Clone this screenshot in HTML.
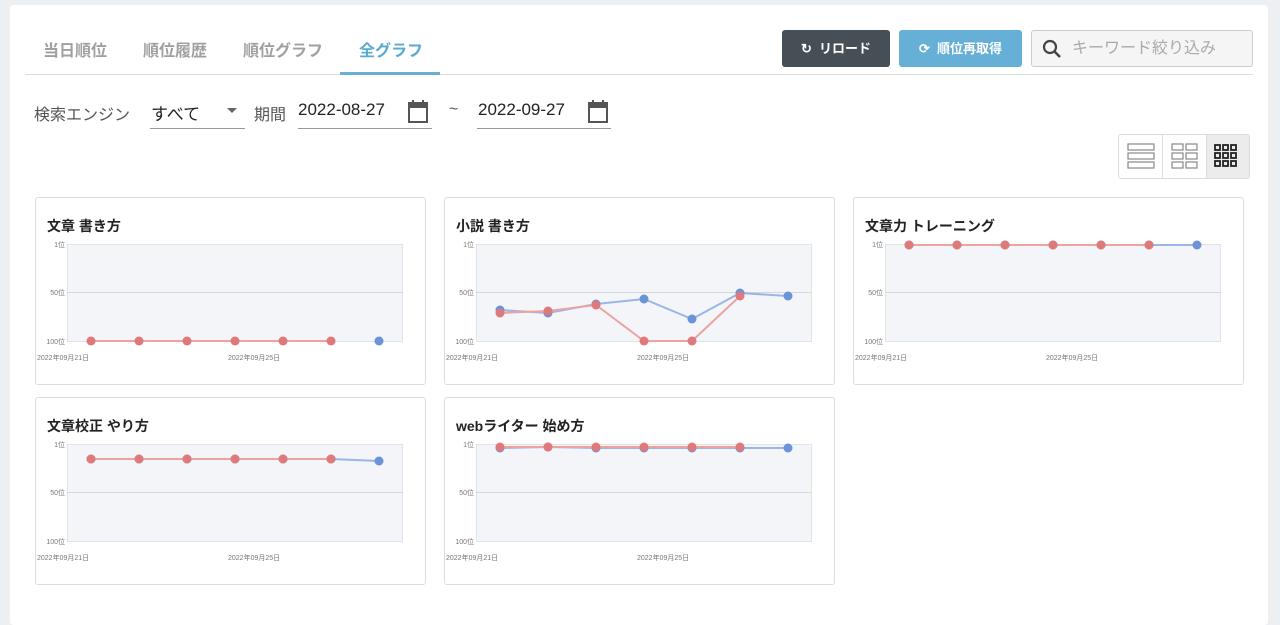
<!DOCTYPE html>
<html><head><meta charset="utf-8"><style>
body{margin:0;width:1280px;height:613px;background:#edf0f3;font-family:"Liberation Sans","Noto Sans CJK JP",sans-serif;overflow:hidden;position:relative}
.panel{position:absolute;left:10px;top:5px;width:1258px;height:620px;background:#fff;border-radius:4px}
.tab{position:absolute;top:37px;font-size:16px;color:#a0a0a0;font-weight:bold}
.abs{position:absolute}
.card{position:absolute;width:389px;height:186px;border:1px solid #ddd;border-radius:3px;background:#fff}
.card h3{position:absolute;left:11px;top:18px;margin:0;font-size:14px;font-weight:bold;color:#222}
.card svg{position:absolute;left:-1px;top:-1px}
</style></head><body>
<div class="panel"></div>
<div class="tab" style="left:43px">当日順位</div>
<div class="tab" style="left:143px">順位履歴</div>
<div class="tab" style="left:243px">順位グラフ</div>
<div class="tab" style="left:359px;color:#5aa9cf">全グラフ</div>
<div class="abs" style="left:25px;top:74px;width:1228px;height:1px;background:#ddd"></div>
<div class="abs" style="left:340px;top:72px;width:100px;height:3px;background:#6ab0d3"></div>

<div class="abs" style="left:782px;top:30px;width:108px;height:37px;background:#454f55;border-radius:3px;color:#fff;font-size:13px;font-weight:bold;line-height:37px;text-align:center">↻&nbsp; リロード</div>
<div class="abs" style="left:899px;top:30px;width:123px;height:37px;background:#66afd6;border-radius:3px;color:#fff;font-size:13px;font-weight:bold;line-height:37px;text-align:center">⟳&nbsp; 順位再取得</div>
<div class="abs" style="left:1031px;top:30px;width:220px;height:35px;background:#f5f5f5;border:1px solid #ccc;border-radius:3px;color:#aaa;font-size:16px;line-height:35px">
<svg width="20" height="20" style="position:absolute;left:10px;top:8px"><circle cx="8" cy="8" r="6" fill="none" stroke="#444" stroke-width="2.2"/><line x1="12.5" y1="12.5" x2="18" y2="18" stroke="#444" stroke-width="2.6"/></svg>
<span style="position:absolute;left:40px">キーワード絞り込み</span></div>

<div class="abs" style="left:34px;top:101px;font-size:16px;color:#555">検索エンジン</div>
<div class="abs" style="left:151px;top:100px;font-size:17px;color:#222">すべて</div>
<div class="abs" style="left:227px;top:108px;width:0;height:0;border-left:5px solid transparent;border-right:5px solid transparent;border-top:5px solid #666"></div>
<div class="abs" style="left:150px;top:128px;width:95px;height:1px;background:#999"></div>
<div class="abs" style="left:254px;top:101px;font-size:16px;color:#555">期間</div>
<div class="abs" style="left:298px;top:100px;font-size:17px;color:#222">2022-08-27</div>
<div class="abs" style="left:298px;top:128px;width:134px;height:1px;background:#999"></div>
<svg class="abs" style="left:407px;top:99px" width="22" height="26"><rect x="2" y="4" width="18" height="19" fill="none" stroke="#555" stroke-width="2"/><rect x="2" y="4" width="18" height="5" fill="#555"/><line x1="6" y1="1" x2="6" y2="5" stroke="#555" stroke-width="2"/><line x1="16" y1="1" x2="16" y2="5" stroke="#555" stroke-width="2"/></svg>
<div class="abs" style="left:449px;top:101px;font-size:16px;color:#555">~</div>
<div class="abs" style="left:478px;top:100px;font-size:17px;color:#222">2022-09-27</div>
<div class="abs" style="left:477px;top:128px;width:134px;height:1px;background:#999"></div>
<svg class="abs" style="left:587px;top:99px" width="22" height="26"><rect x="2" y="4" width="18" height="19" fill="none" stroke="#555" stroke-width="2"/><rect x="2" y="4" width="18" height="5" fill="#555"/><line x1="6" y1="1" x2="6" y2="5" stroke="#555" stroke-width="2"/><line x1="16" y1="1" x2="16" y2="5" stroke="#555" stroke-width="2"/></svg>

<div class="abs" style="left:1118px;top:134px;width:130px;height:43px;border:1px solid #ddd;border-radius:3px;background:#fff;overflow:hidden">
<div class="abs" style="left:87px;top:0;width:43px;height:43px;background:#ececec;border-left:1px solid #ddd"></div>
<div class="abs" style="left:43px;top:0;width:1px;height:43px;background:#ddd"></div>
<svg class="abs" style="left:0;top:0" width="130" height="43">
<g fill="none" stroke="#888" stroke-width="1.2"><rect x="9" y="9" width="26" height="6"/><rect x="9" y="18" width="26" height="6"/><rect x="9" y="27" width="26" height="6"/>
<rect x="53" y="9" width="11" height="6"/><rect x="67" y="9" width="11" height="6"/><rect x="53" y="18" width="11" height="6"/><rect x="67" y="18" width="11" height="6"/><rect x="53" y="27" width="11" height="6"/><rect x="67" y="27" width="11" height="6"/></g>
<g fill="none" stroke="#222" stroke-width="1.8"><rect x="96" y="10" width="5" height="5"/><rect x="104" y="10" width="5" height="5"/><rect x="112" y="10" width="5" height="5"/><rect x="96" y="18" width="5" height="5"/><rect x="104" y="18" width="5" height="5"/><rect x="112" y="18" width="5" height="5"/><rect x="96" y="26" width="5" height="5"/><rect x="104" y="26" width="5" height="5"/><rect x="112" y="26" width="5" height="5"/></g>
</svg></div>

<div id="cards"></div>
<script>
var cards=[
[35,197,"文章 書き方",[144,144,144,144,144,144,null],[null,null,null,null,null,null,144]],
[444,197,"小説 書き方",[116,114,108,144,144,99,null],[113,116,107,102,122,96,99]],
[853,197,"文章力 トレーニング",[48,48,48,48,48,48,null],[48,48,48,48,48,48,48]],
[35,397,"文章校正 やり方",[62,62,62,62,62,62,null],[62,62,62,62,62,62,64]],
[444,397,"webライター 始め方",[50,50,50,50,50,50,null],[51,50,51,51,51,51,51]]];
var h="";
cards.forEach(function(c){
 var s='<div class="card" style="left:'+c[0]+'px;top:'+c[1]+'px"><h3>'+c[2]+'</h3><svg width="389" height="186">';
 s+='<rect x="32.5" y="47.5" width="335" height="97" fill="#f3f5f8" stroke="#dde4ea"/><line x1="32" y1="95.5" x2="368" y2="95.5" stroke="#d4d8dc"/>';
 s+='<g font-size="7" fill="#777" font-family="Liberation Sans,Noto Sans CJK JP,sans-serif"><text x="30" y="50" text-anchor="end">1位</text><text x="30" y="98" text-anchor="end">50位</text><text x="30" y="147" text-anchor="end">100位</text><text x="2" y="163">2022年09月21日</text><text x="193" y="163">2022年09月25日</text></g>';
 function series(d,col,lc){var p=[],dots="";d.forEach(function(v,i){if(v!==null){var x=56+48*i;p.push(x+","+v);dots+='<circle cx="'+x+'" cy="'+v+'" r="4.5" fill="'+col+'"/>';}});
  return '<polyline points="'+p.join(" ")+'" fill="none" stroke="'+lc+'" stroke-width="2"/>'+dots;}
 s+=series(c[4],"#6a93d8","#9bb5e6")+series(c[3],"#e07a7a","#eea3a0");
 s+='</svg></div>';h+=s;});
document.getElementById("cards").innerHTML=h;
</script>
</body></html>
